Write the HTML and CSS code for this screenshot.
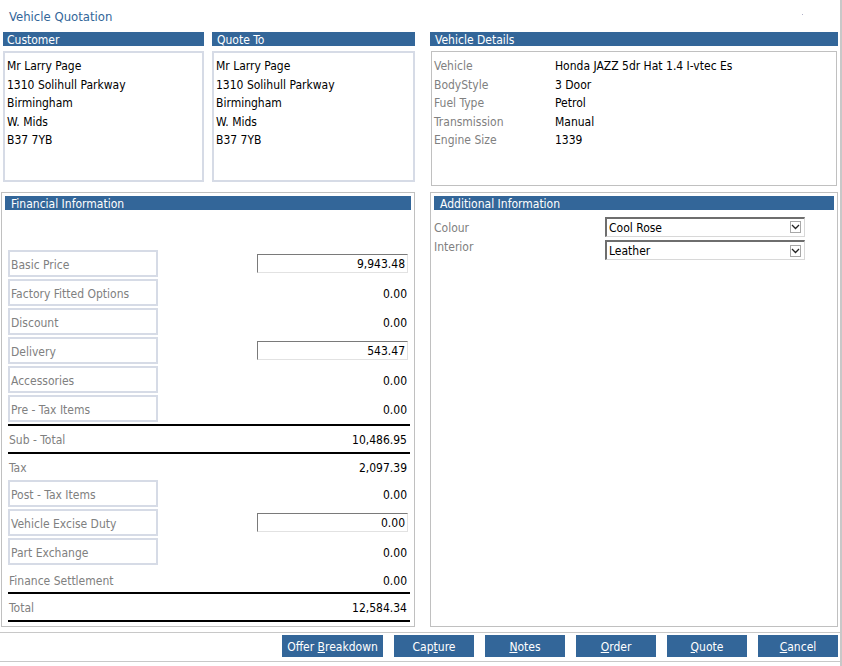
FILE: index.html
```html
<!DOCTYPE html>
<html>
<head>
<meta charset="utf-8">
<link rel="stylesheet" href="styles.css">
</head>
<body>
<div class="window">
  <div class="title">Vehicle Quotation</div>
  <span class="speck"></span>

  <div class="top-row">
    <section class="addr-col customer">
      <div class="bar bar-customer">Customer</div>
      <div class="addr-box">
        <div>Mr Larry Page</div>
        <div>1310 Solihull Parkway</div>
        <div>Birmingham</div>
        <div>W. Mids</div>
        <div>B37 7YB</div>
      </div>
    </section>
    <section class="addr-col quote-to">
      <div class="bar">Quote To</div>
      <div class="addr-box">
        <div>Mr Larry Page</div>
        <div>1310 Solihull Parkway</div>
        <div>Birmingham</div>
        <div>W. Mids</div>
        <div>B37 7YB</div>
      </div>
    </section>
    <section class="details-col">
      <div class="bar">Vehicle Details</div>
      <div class="details-box">
        <div class="d-label">Vehicle</div><div class="d-value">Honda JAZZ 5dr Hat 1.4 I-vtec Es</div>
        <div class="d-label">BodyStyle</div><div class="d-value">3 Door</div>
        <div class="d-label">Fuel Type</div><div class="d-value">Petrol</div>
        <div class="d-label">Transmission</div><div class="d-value">Manual</div>
        <div class="d-label">Engine Size</div><div class="d-value">1339</div>
      </div>
    </section>
  </div>

  <div class="main-row">
    <section class="panel fin">
      <div class="panel-bar">Financial Information</div>
      <div class="fin-rows">
        <div class="frow"><div class="lbox">Basic Price</div><div class="inbox">9,943.48</div></div>
        <div class="frow"><div class="lbox">Factory Fitted Options</div><div class="val">0.00</div></div>
        <div class="frow"><div class="lbox">Discount</div><div class="val">0.00</div></div>
        <div class="frow"><div class="lbox">Delivery</div><div class="inbox">543.47</div></div>
        <div class="frow"><div class="lbox">Accessories</div><div class="val">0.00</div></div>
        <div class="frow"><div class="lbox">Pre - Tax Items</div><div class="val">0.00</div></div>
        <div class="rule rule-first"></div>
        <div class="trow"><div class="tlabel">Sub - Total</div><div class="val">10,486.95</div></div>
        <div class="rule"></div>
        <div class="trow"><div class="tlabel">Tax</div><div class="val">2,097.39</div></div>
        <div class="frow"><div class="lbox">Post - Tax Items</div><div class="val">0.00</div></div>
        <div class="frow"><div class="lbox">Vehicle Excise Duty</div><div class="inbox">0.00</div></div>
        <div class="frow"><div class="lbox">Part Exchange</div><div class="val">0.00</div></div>
        <div class="trow trow-short"><div class="tlabel">Finance Settlement</div><div class="val">0.00</div></div>
        <div class="rule"></div>
        <div class="trow"><div class="tlabel">Total</div><div class="val">12,584.34</div></div>
        <div class="rule"></div>
      </div>
    </section>

    <section class="panel addl">
      <div class="panel-bar">Additional Information</div>
      <div class="arow">
        <div class="a-label">Colour</div>
        <div class="select"><span class="sel-text">Cool Rose</span><span class="sel-btn"><svg width="9" height="6" viewBox="0 0 9 6"><path d="M1 1 L4.5 4.5 L8 1" fill="none" stroke="#222" stroke-width="1.3"/></svg></span></div>
      </div>
      <div class="arow arow-top">
        <div class="a-label a-label-top">Interior</div>
        <div class="select"><span class="sel-text">Leather</span><span class="sel-btn"><svg width="9" height="6" viewBox="0 0 9 6"><path d="M1 1 L4.5 4.5 L8 1" fill="none" stroke="#222" stroke-width="1.3"/></svg></span></div>
      </div>
    </section>
  </div>

  <footer class="footer">
    <button class="btn btn-wide">Offer <u>B</u>reakdown</button>
    <button class="btn">Cap<u>t</u>ure</button>
    <button class="btn"><u>N</u>otes</button>
    <button class="btn"><u>O</u>rder</button>
    <button class="btn"><u>Q</u>uote</button>
    <button class="btn"><u>C</u>ancel</button>
  </footer>
</div>
</body>
</html>
```

FILE: styles.css
```css
* { box-sizing: border-box; }
html, body { margin: 0; padding: 0; background: #fff; }
body {
  font-family: "DejaVu Sans Condensed", "DejaVu Sans", sans-serif;
  font-size: 12px;
  color: #000;
}
.window {
  width: 842px;
  height: 666px;
  border-right: 2px solid #c8c8c8;
  position: relative;
}
.title {
  height: 32px;
  padding: 9px 0 0 9px;
  font-size: 13px;
  line-height: 16px;
  color: #336699;
}
.speck {
  position: absolute;
  left: 802px;
  top: 14px;
  width: 1px;
  height: 1px;
  background: #b0b0c8;
}
.top-row {
  display: flex;
  margin-left: 3px;
}
.bar {
  height: 14px;
  line-height: 16px;
  background: #336699;
  color: #fff;
  padding-left: 5px;
  white-space: nowrap;
  overflow: hidden;
}
.bar-customer { padding-left: 4px; }
.customer { width: 201px; }
.quote-to { width: 203px; margin-left: 8px; }
.details-col { width: 408px; margin-left: 15px; }
.addr-box {
  margin-top: 5px;
  height: 131px;
  border: 2px solid #d6dbe6;
  padding: 4px 0 0 2px;
  line-height: 18.6px;
  white-space: nowrap;
}
.details-box {
  margin: 5px 1px 0 1px;
  height: 135px;
  border: 1px solid #c0c0c0;
  padding: 5px 0 0 2px;
  display: grid;
  grid-template-columns: 121px 1fr;
  grid-auto-rows: 18.5px;
  align-content: start;
  line-height: 18.5px;
}
.d-label { color: #808080; }
.main-row {
  display: flex;
  margin: 6px 0 0 1px;
}
.panel {
  border: 1px solid #c0c0c0;
  height: 435px;
  padding: 3px;
}
.fin { width: 414px; }
.addl { width: 408px; margin-left: 15px; }
.panel-bar {
  height: 14px;
  line-height: 16px;
  background: #336699;
  color: #fff;
  padding-left: 6px;
  overflow: hidden;
}
.fin-rows {
  margin: 40px 0 0 3px;
  padding-right: 1px;
}
.frow {
  display: flex;
  align-items: center;
  justify-content: space-between;
  height: 27px;
  margin-bottom: 2px;
}
.lbox {
  width: 150px;
  height: 27px;
  border: 2px solid #d6dbe6;
  color: #808080;
  padding-left: 1px;
  line-height: 26px;
  white-space: nowrap;
}
.val {
  padding-right: 3px;
  padding-top: 2px;
  text-align: right;
}
.inbox {
  width: 151px;
  height: 19px;
  margin-right: 2px;
  border-style: solid;
  border-width: 1px;
  border-color: #7a7a7a #e2e2e2 #e2e2e2 #7a7a7a;
  text-align: right;
  padding-right: 2px;
  line-height: 18px;
}
.rule {
  height: 2px;
  background: #000;
}
.rule-first { margin-top: 1px; }
.trow {
  display: flex;
  align-items: center;
  justify-content: space-between;
  height: 26px;
}
.trow-short { height: 25px; }
.tlabel {
  color: #808080;
  padding-left: 1px;
  padding-top: 2px;
}
.arow {
  display: flex;
  align-items: center;
  margin-top: 7px;
  height: 19px;
}
.arow-top { margin-top: 4px; align-items: flex-start; }
.a-label {
  width: 171px;
  color: #808080;
  padding-top: 2px;
}
.a-label-top { margin-top: -1px; padding-top: 0; line-height: 16px; }
.select {
  width: 200px;
  height: 20px;
  border-style: solid;
  border-width: 2px 1px 1px 2px;
  border-color: #6e6e6e #d8d8d8 #d8d8d8 #6e6e6e;
  display: flex;
  align-items: center;
  padding: 0 3px 0 2px;
}
.sel-text { flex: 1; line-height: 18px; padding-top: 1px; }
.sel-btn {
  width: 11px;
  height: 12px;
  border: 1px solid #a8a8a8;
  display: flex;
  align-items: center;
  justify-content: center;
  background: #fff;
}
.footer {
  margin-top: 5px;
  width: 840px;
  border-top: 1px solid #c8c8c8;
  border-bottom: 1px solid #c8c8c8;
  padding: 2px 2px 4px 0;
  display: flex;
  justify-content: flex-end;
  gap: 11px;
}
.btn {
  width: 80px;
  height: 22px;
  border: none;
  background: #336699;
  color: #fff;
  font-family: inherit;
  font-size: 12px;
  padding: 1px 0 0;
  line-height: 22px;
}
.btn-wide { width: 101px; }
```
